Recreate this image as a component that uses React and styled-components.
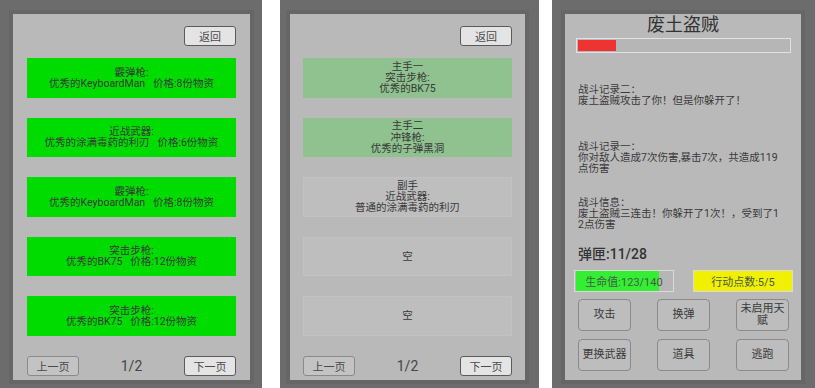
import React from "react";
import styled, { createGlobalStyle } from "styled-components";

const GlobalStyle = createGlobalStyle`
  html, body {
    margin: 0;
    background: #ffffff;
  }
  body {
    font-family: Roboto, "Noto Sans CJK SC", sans-serif;
    color: #333;
  }
`;

const shopItems = [
  ["霰弹枪:", "优秀的KeyboardMan   价格:8份物资"],
  ["近战武器:", "优秀的涂满毒药的利刃   价格:6份物资"],
  ["霰弹枪:", "优秀的KeyboardMan   价格:8份物资"],
  ["突击步枪:", "优秀的BK75   价格:12份物资"],
  ["突击步枪:", "优秀的BK75   价格:12份物资"],
];

const slots = [
  { lines: ["主手一", "突击步枪:", "优秀的BK75"], filled: true },
  { lines: ["主手二", "冲锋枪:", "优秀的子弹黑洞"], filled: true },
  { lines: ["副手", "近战武器:", "普通的涂满毒药的利刃"], filled: false },
  { lines: ["空"], filled: false },
  { lines: ["空"], filled: false },
];

const logs = [
  { gap: 31, lines: ["战斗记录二：", "废土盗贼攻击了你！但是你躲开了！"] },
  {
    gap: 35,
    lines: ["战斗记录一：", "你对敌人造成7次伤害,暴击7次，共造成119", "点伤害"],
  },
  {
    gap: 23,
    lines: ["战斗信息：", "废土盗贼三连击！你躲开了1次！，受到了1", "2点伤害"],
  },
];

const actions = [
  ["攻击"],
  ["换弹"],
  ["未启用天", "赋"],
  ["更换武器"],
  ["道具"],
  ["逃跑"],
];

const hp = 123;
const hpMax = 140;
const enemyHp = 0.18;

// 上一页 / 1/2 / 下一页
const Pagination = () => (
  <Pager>
    <SmallButton>上一页</SmallButton>
    <PageNum>1/2</PageNum>
    <SmallButton $light>下一页</SmallButton>
  </Pager>
);

const App = () => {
  return (
    <Page>
      <GlobalStyle />

      <Phone $width={262} $pl={13} $pr={12}>
        <Screen $px={14}>
          <TopBar>
            <SmallButton $light>返回</SmallButton>
          </TopBar>
          <CardList>
            {shopItems.map((item, i) => (
              <Card key={i} $bg="#00dc00">
                {item.map((line, j) => (
                  <CardLine key={j}>{line}</CardLine>
                ))}
              </Card>
            ))}
          </CardList>
          <Pagination />
        </Screen>
      </Phone>

      <Phone $width={259} $pl={10} $pr={14} $ml={18}>
        <Screen $px={13}>
          <TopBar>
            <SmallButton $light>返回</SmallButton>
          </TopBar>
          <CardList>
            {slots.map((slot, i) => (
              <Card
                key={i}
                $bg={slot.filled ? "#8fc28f" : "#bebebe"}
                $outline={!slot.filled}
              >
                {slot.lines.map((line, j) => (
                  <CardLine key={j}>{line}</CardLine>
                ))}
              </Card>
            ))}
          </CardList>
          <Pagination />
        </Screen>
      </Phone>

      <Phone $width={263} $pl={13} $pr={14} $ml={13}>
        <BattleScreen>
          <EnemyName>废土盗贼</EnemyName>
          <EnemyBar>
            <EnemyFill style={{ width: `${enemyHp * 100}%` }} />
          </EnemyBar>

          {logs.map((log, i) => (
            <LogEntry key={i} $gap={log.gap}>
              {log.lines.map((line, j) => (
                <div key={j}>{line}</div>
              ))}
            </LogEntry>
          ))}

          <Ammo>弹匣:11/28</Ammo>

          <StatsRow>
            <StatBox>
              <StatFill style={{ width: `${(hp / hpMax) * 96}%` }} />
              <StatText>
                生命值:{hp}/{hpMax}
              </StatText>
            </StatBox>
            <StatBox $bg="#f0f000">
              <StatText>行动点数:5/5</StatText>
            </StatBox>
          </StatsRow>

          <ActionGrid>
            {actions.map((a, i) => (
              <ActionButton key={i}>
                {a.map((line, j) => (
                  <div key={j}>{line}</div>
                ))}
              </ActionButton>
            ))}
          </ActionGrid>
        </BattleScreen>
      </Phone>
    </Page>
  );
};

const Page = styled.div`
  display: flex;
  width: 815px;
  height: 388px;
  overflow: hidden;
`;

const Phone = styled.div`
  box-sizing: border-box;
  flex: none;
  width: ${(p) => p.$width}px;
  margin-left: ${(p) => p.$ml || 0}px;
  height: 388px;
  padding: 14px ${(p) => p.$pr}px 8px ${(p) => p.$pl}px;
  background: #6c6c6c;
`;

const Screen = styled.div`
  box-sizing: border-box;
  display: flex;
  flex-direction: column;
  height: 366px;
  padding: 12px ${(p) => p.$px}px 4px;
  background: #b9b9b9;
  box-shadow: 0 0 0 4px #666666;
`;

const TopBar = styled.div`
  display: flex;
  justify-content: flex-end;
`;

const SmallButton = styled.div`
  box-sizing: border-box;
  width: 52px;
  height: 20px;
  display: flex;
  align-items: center;
  justify-content: center;
  border-radius: 3px;
  border: 1px solid ${(p) => (p.$light ? "#5a5a5a" : "#8a8a8a")};
  background: ${(p) => (p.$light ? "#e4e4e4" : "#c3c3c3")};
  color: #4a4a4a;
  font-size: 11px;
`;

const CardList = styled.div`
  display: flex;
  flex-direction: column;
  gap: 20px;
  margin-top: 12px;
`;

const Card = styled.div`
  box-sizing: border-box;
  height: 39.5px;
  display: flex;
  flex-direction: column;
  align-items: center;
  justify-content: center;
  background: ${(p) => p.$bg};
  border: 1px solid ${(p) => (p.$outline ? "#c2c2c2" : "transparent")};
  font-size: 10.5px;
  line-height: 11.2px;
  color: #383838;
`;

const CardLine = styled.div`
  white-space: pre;
`;

const Pager = styled.div`
  display: flex;
  align-items: center;
  justify-content: space-between;
  margin-top: auto;
`;

const PageNum = styled.div`
  font-size: 14px;
  color: #454545;
`;

const BattleScreen = styled.div`
  box-sizing: border-box;
  display: flex;
  flex-direction: column;
  height: 366px;
  background: #b9b9b9;
  box-shadow: 0 0 0 4px #666666;
`;

const EnemyName = styled.div`
  height: 22px;
  line-height: 22px;
  text-align: center;
  font-size: 18px;
  color: #333;
`;

const EnemyBar = styled.div`
  box-sizing: border-box;
  height: 15px;
  margin: 2px 10px 0 11px;
  padding: 1px;
  border: 1px solid #e2e2e2;
  background: #b6b6b6;
`;

const EnemyFill = styled.div`
  height: 100%;
  background: #ee3333;
`;

const LogEntry = styled.div`
  margin-top: ${(p) => p.$gap}px;
  padding-left: 13px;
  font-size: 10.5px;
  line-height: 11px;
  color: #3a3a3a;
  white-space: nowrap;
`;

const Ammo = styled.div`
  margin-top: 15px;
  padding-left: 13px;
  height: 18px;
  line-height: 18px;
  font-size: 14px;
  font-weight: 500;
  color: #333;
`;

const StatsRow = styled.div`
  display: flex;
  justify-content: space-between;
  margin-top: 7px;
  padding: 0 8px 0 9px;
`;

const StatBox = styled.div`
  box-sizing: border-box;
  position: relative;
  width: 100px;
  height: 22px;
  display: flex;
  align-items: center;
  justify-content: center;
  border: 1px solid #dadada;
  background: ${(p) => p.$bg || "#b6b6b6"};
  overflow: hidden;
`;

const StatFill = styled.div`
  position: absolute;
  left: 1px;
  top: 0;
  bottom: 0;
  background: #33ee33;
`;

const StatText = styled.span`
  position: relative;
  font-size: 11px;
  color: #4a5a4a;
`;

const ActionGrid = styled.div`
  display: grid;
  grid-template-columns: repeat(3, 53px);
  grid-auto-rows: 32px;
  justify-content: space-between;
  row-gap: 8px;
  margin-top: 7px;
  padding: 0 12px 0 13px;
`;

const ActionButton = styled.div`
  box-sizing: border-box;
  display: flex;
  flex-direction: column;
  align-items: center;
  justify-content: center;
  border: 1px solid #8a8a8a;
  border-radius: 4px;
  background: #bdbdbd;
  font-size: 11px;
  line-height: 12px;
  color: #3a3a3a;
  text-align: center;
`;

export default App;
